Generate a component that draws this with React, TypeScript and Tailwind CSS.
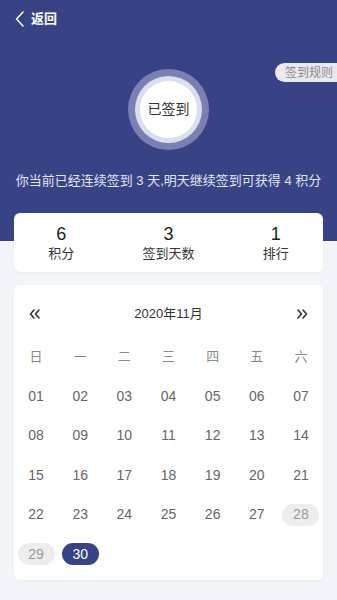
import React from "react";

const FONT = "font-['Liberation_Sans','Noto_Sans_CJK_SC',sans-serif]";

const weekdays = ["日", "一", "二", "三", "四", "五", "六"];

type Day = { label: string; state?: "missed" | "signed" };

const days: Day[] = [
  ...Array.from({ length: 27 }, (_, i) => ({ label: String(i + 1).padStart(2, "0") })),
  { label: "28", state: "missed" },
  { label: "29", state: "missed" },
  { label: "30", state: "signed" },
];

const stats = [
  { value: "6", label: "积分" },
  { value: "3", label: "签到天数" },
  { value: "1", label: "排行" },
];

const DoubleChevron = ({ dir }: { dir: "left" | "right" }) => (
  <svg width="12" height="12" viewBox="0 0 12 12" fill="none" stroke="#333" strokeWidth="1.6" strokeLinecap="round" strokeLinejoin="round">
    {dir === "left" ? (
      <>
        <polyline points="5,2 1.5,6 5,10" />
        <polyline points="10,2 6.5,6 10,10" />
      </>
    ) : (
      <>
        <polyline points="2,2 5.5,6 2,10" />
        <polyline points="7,2 10.5,6 7,10" />
      </>
    )}
  </svg>
);

export default function App() {
  return (
    <div className={`min-h-[600px] bg-[#f1f4f8] ${FONT}`}>
      <header className="relative bg-[#384386] pb-[51px]">
        <div className="flex h-[38px] items-center gap-[7px] pl-[15px]">
          <svg width="9" height="16" viewBox="0 0 9 16" fill="none" stroke="white" strokeWidth="1.5" strokeLinecap="round" strokeLinejoin="round">
            <polyline points="8,1 1.5,8 8,15" />
          </svg>
          <span className="text-[13px] font-bold text-white">返回</span>
        </div>

        <div className="absolute right-0 top-[63px] flex h-[19px] items-center rounded-l-full bg-[#e9e9ee] pl-[10px] pr-[4px] text-[12px] text-[#8a8a90]">
          签到规则
        </div>

        <div className="mx-auto mt-[31px] flex h-[81px] w-[81px] items-center justify-center rounded-full bg-[#7a80b3]">
          <div className="flex h-[67px] w-[67px] items-center justify-center rounded-full bg-[#dcdeeb]">
            <div className="flex h-[57px] w-[57px] items-center justify-center rounded-full bg-white text-[14px] text-[#333]">
              已签到
            </div>
          </div>
        </div>

        <p className="mt-[22px] text-center text-[13px] leading-[18px] text-[#e2e4f0]">
          你当前已经连续签到 3 天,明天继续签到可获得 4 积分
        </p>
      </header>

      <section className="relative mx-[14px] -mt-[28px] flex h-[59px] justify-around rounded-[6px] bg-white pt-[10px] shadow-[0_1px_3px_rgba(0,0,0,0.04)]">
        {stats.map((s) => (
          <div key={s.label} className="flex flex-col items-center">
            <div className="text-[18px] leading-[22px] text-[#222]">{s.value}</div>
            <div className="text-[13px] leading-[18px] text-[#333]">{s.label}</div>
          </div>
        ))}
      </section>

      <section className="mx-[14px] mt-[13px] rounded-[6px] bg-white pb-[6px] pt-[19px] shadow-[0_1px_3px_rgba(0,0,0,0.04)]">
        <div className="flex h-[20px] items-center justify-between px-[15px]">
          <DoubleChevron dir="left" />
          <span className="text-[13px] text-[#333]">2020年11月</span>
          <DoubleChevron dir="right" />
        </div>

        <div className="mt-[13px] grid grid-cols-7">
          {weekdays.map((w) => (
            <div key={w} className="flex h-[39.5px] items-center justify-center text-[13px] text-[#888]">
              {w}
            </div>
          ))}
          {days.map((d) => (
            <div key={d.label} className="flex h-[39.5px] items-center justify-center">
              <span
                className={
                  d.state === "signed"
                    ? "flex h-[22px] w-[37px] items-center justify-center rounded-full bg-[#384386] text-[14px] text-white"
                    : d.state === "missed"
                    ? "flex h-[22px] w-[37px] items-center justify-center rounded-full bg-[#ededed] text-[14px] text-[#999]"
                    : "text-[14px] text-[#666]"
                }
              >
                {d.label}
              </span>
            </div>
          ))}
        </div>
      </section>
    </div>
  );
}
